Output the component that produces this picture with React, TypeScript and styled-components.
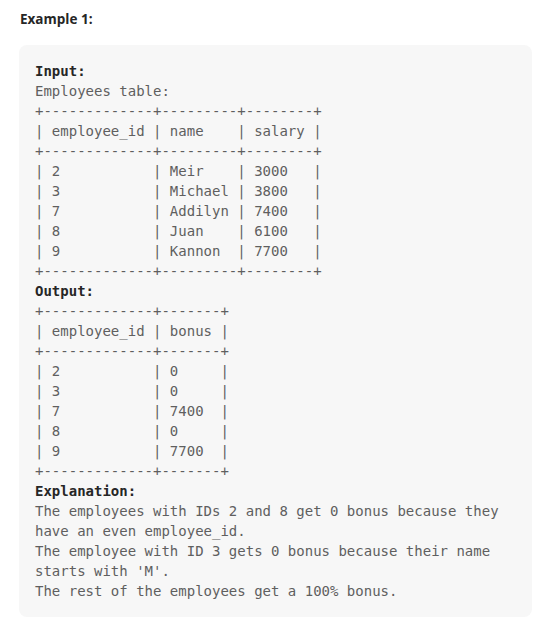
import React from 'react';
import styled, {createGlobalStyle} from 'styled-components';

const GlobalStyle = createGlobalStyle`
  body {
    margin: 0;
    background: #ffffff;
  }
`;

const inputTable = `+-------------+---------+--------+
| employee_id | name    | salary |
+-------------+---------+--------+
| 2           | Meir    | 3000   |
| 3           | Michael | 3800   |
| 7           | Addilyn | 7400   |
| 8           | Juan    | 6100   |
| 9           | Kannon  | 7700   |
+-------------+---------+--------+`;

const outputTable = `+-------------+-------+
| employee_id | bonus |
+-------------+-------+
| 2           | 0     |
| 3           | 0     |
| 7           | 7400  |
| 8           | 0     |
| 9           | 7700  |
+-------------+-------+`;

const explanation = `The employees with IDs 2 and 8 get 0 bonus because they have an even employee_id.
The employee with ID 3 gets 0 bonus because their name starts with 'M'.
The rest of the employees get a 100% bonus.`;

export default function App() {
    return (
        <>
            <GlobalStyle/>
            <Page>
                <Title>Example 1:</Title>
                <ExampleBlock>
                    <Label>Input:</Label>
                    {'\nEmployees table:\n'}
                    {inputTable}
                    {'\n'}
                    <Label>Output:</Label>
                    {'\n'}
                    {outputTable}
                    {'\n'}
                    <Label>Explanation:</Label>
                    {'\n'}
                    {explanation}
                </ExampleBlock>
            </Page>
        </>
    );
}

const Page = styled.div`
  padding: 9px 15px 0 19px;
  width: 513px;
`;

const Title = styled.div`
  margin: 0 0 16px 1px;
  font-family: "Open Sans", "Noto Sans", sans-serif;
  font-size: 13.5px;
  font-weight: 700;
  line-height: 20px;
  color: #262626;
`;

const ExampleBlock = styled.pre`
  margin: 0;
  padding: 16px;
  border-radius: 8px;
  background: #f7f7f7;
  font-family: "DejaVu Sans Mono", "Liberation Mono", monospace;
  font-size: 14px;
  line-height: 20px;
  color: #5f5f5f;
  white-space: pre-wrap;
`;

const Label = styled.strong`
  font-weight: 700;
  color: #262626;
`;
